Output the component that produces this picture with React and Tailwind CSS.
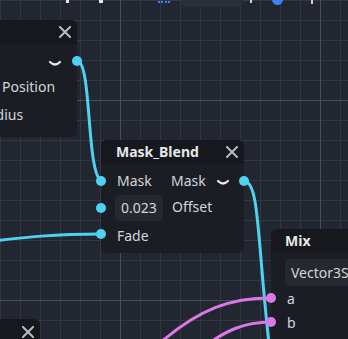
import React from 'react'

const font = { fontFamily: '"Noto Sans", "Open Sans", sans-serif' }

const CloseIcon = ({ className }) => (
    <svg className={className} width="12" height="12" viewBox="0 0 12 12">
        <path d="M1 1 L11 11 M11 1 L1 11" stroke="#b9bcc2" strokeWidth="2" strokeLinecap="square" />
    </svg>
)

const Chevron = ({ className }) => (
    <svg className={className} width="12" height="8" viewBox="0 0 12 8">
        <path d="M1 2 Q6 7 11 2" stroke="#e8e9ec" strokeWidth="2.2" fill="none" strokeLinecap="round" />
    </svg>
)

const Grid = () => {
    const minor = []
    for (let i = 0; i <= 18; i++) {
        minor.push(<line key={'v' + i} x1={i * 20 + 0.5} y1="0" x2={i * 20 + 0.5} y2="339" />)
        minor.push(<line key={'h' + i} x1="0" y1={i * 20 + 0.5} x2="348" y2={i * 20 + 0.5} />)
    }
    return (
        <svg className="absolute inset-0" width="348" height="339">
            <g stroke="#323744" strokeWidth="1">{minor}</g>
            <g stroke="#474c59" strokeWidth="1">
                <line x1="120.5" y1="0" x2="120.5" y2="339" />
                <line x1="320.5" y1="0" x2="320.5" y2="339" />
                <line x1="0" y1="100.5" x2="348" y2="100.5" />
                <line x1="0" y1="300.5" x2="348" y2="300.5" />
            </g>
        </svg>
    )
}

const Wires = () => (
    <svg className="absolute inset-0 z-20 pointer-events-none" width="348" height="339">
        <g fill="none" strokeWidth="3" strokeLinecap="round">
            <path d="M77 61 C 92 61, 86 170, 101 181" stroke="#4fd2f2" />
            <path d="M-40 245 C 30 236, 60 234, 101 234" stroke="#4fd2f2" />
            <path d="M244 181 C 262 181, 256 260, 276 400" stroke="#4fd2f2" />
            <path d="M150 352 C 200 305, 235 298, 271 298" stroke="#dc78e6" />
            <path d="M200 350 C 225 330, 245 322, 271 322" stroke="#dc78e6" />
        </g>
        <g fill="#4fd2f2">
            <circle cx="77" cy="61" r="5" />
            <circle cx="101" cy="181" r="5" />
            <circle cx="101" cy="208" r="5" />
            <circle cx="101" cy="234" r="5" />
            <circle cx="244" cy="181" r="5" />
        </g>
        <g fill="#dc78e6">
            <circle cx="271" cy="298" r="5" />
            <circle cx="271" cy="322" r="5" />
        </g>
    </svg>
)

const App = () => {
    return (
        <div className="relative w-[348px] h-[339px] overflow-hidden bg-[#222630] text-[#d4d6da] text-[14px]" style={font}>
            <Grid />

            {/* bits of the toolbar cut off at the top */}
            <div className="absolute left-[181px] -top-[20px] w-[62px] h-[27px] rounded-md bg-[#2a2e38]" />
            <div className="absolute left-[66px] top-0 w-[3px] h-[3px] bg-[#e6e6e6]" />
            <div className="absolute left-[99px] top-0 w-[4px] h-[3px] bg-[#e6e6e6]" />
            <div className="absolute left-[158px] top-0 w-[12px] h-[3px] border-b-2 border-dotted border-[#3b82f6]" />
            <div className="absolute left-[250px] top-0 w-[2px] h-[3px] bg-[#d0d0d0]" />
            <div className="absolute left-[272px] -top-[6px] w-[11px] h-[11px] rounded-full bg-[#3b82f6]" />
            <div className="absolute left-[311px] top-0 w-[2px] h-[4px] bg-[#d0d0d0]" />

            {/* left node, mostly off screen */}
            <div className="absolute -left-[80px] top-[20px] w-[157px] h-[117px] rounded-md bg-[#1b1d24] flex flex-col z-10">
                <div className="h-[24px] rounded-t-md bg-[#16181d] flex items-center justify-end pr-[6px]">
                    <CloseIcon />
                </div>
                <div className="h-[28px] flex items-center justify-end pr-[16px]">
                    <Chevron className="mt-[12px]" />
                </div>
                <div className="h-[28px] flex items-center pl-[82px]">Position</div>
                <div className="h-[28px] flex items-center pl-[59px]">Radius</div>
            </div>

            {/* Mask_Blend node */}
            <div className="absolute left-[101px] top-[140px] w-[143px] h-[113px] rounded-md bg-[#1b1d24] flex flex-col z-10">
                <div className="h-[24px] rounded-t-md bg-[#16181d] flex items-center justify-between pl-[15px] pr-[6px]">
                    <span className="font-bold text-[#e6e7ea] -mt-[1px]">Mask_Blend</span>
                    <CloseIcon />
                </div>
                <div className="h-[30px] flex items-center pl-[16px] pt-[2px]">
                    <span className="w-[54px]">Mask</span>
                    <span>Mask</span>
                    <Chevron className="ml-[11px] mt-[5px]" />
                </div>
                <div className="h-[27px] flex items-center pl-[14px]">
                    <span className="w-[48px] h-[26px] rounded bg-[#252830] flex items-center justify-center">0.023</span>
                    <span className="ml-[9px] -mt-[3px]">Offset</span>
                </div>
                <div className="h-[28px] flex items-center pl-[16px]">Fade</div>
            </div>

            {/* Mix node */}
            <div className="absolute left-[271px] top-[229px] w-[120px] h-[130px] rounded-md bg-[#1b1d24] flex flex-col z-10">
                <div className="h-[23px] rounded-t-md bg-[#16181d] flex items-center pl-[14px]">
                    <span className="font-bold text-[#e6e7ea]">Mix</span>
                </div>
                <div className="pl-[14px] pt-[7px]">
                    <div className="h-[27px] rounded bg-[#252830] flex items-center pl-[6px] whitespace-nowrap">Vector3Select</div>
                </div>
                <div className="h-[24px] flex items-center pl-[16px]">a</div>
                <div className="h-[24px] flex items-center pl-[16px]">b</div>
            </div>

            {/* bottom-left node */}
            <div className="absolute -left-[80px] top-[319px] w-[120px] h-[60px] rounded-md bg-[#16181d] flex justify-end pt-[7px] pr-[6px] z-10">
                <CloseIcon />
            </div>

            <Wires />
        </div>
    )
}

export default App
